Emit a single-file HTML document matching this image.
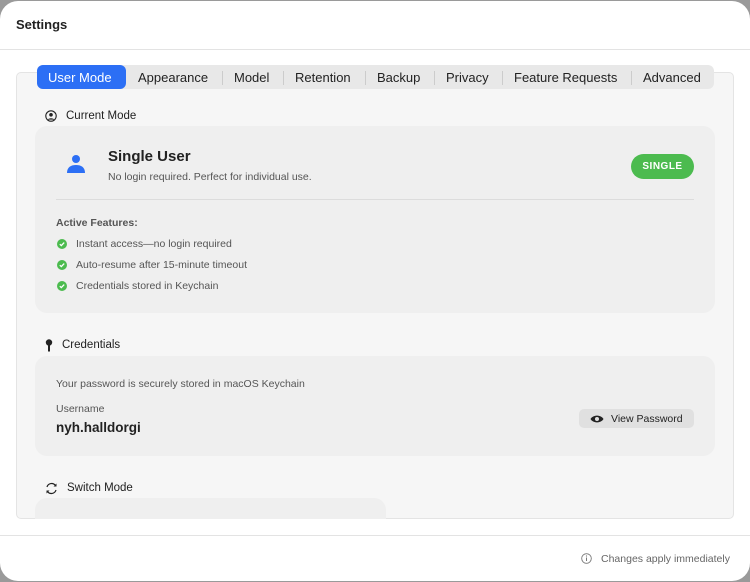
<!DOCTYPE html>
<html><head><style>
*{margin:0;padding:0;box-sizing:border-box}
body{width:750px;height:582px;background:#9a9a9a;font-family:"Liberation Sans",sans-serif;position:relative;overflow:hidden;color:#222}
.win{position:absolute;left:0;top:1px;width:750px;height:580px;background:#fff;border-radius:18px;overflow:hidden}
.abs{position:absolute}
.t{position:absolute;white-space:nowrap}
.s{font-size:10.5px;color:#555}
.h{font-size:11.5px}
</style></head><body>
<div class="win">
<div class="t" style="left:16px;top:16px;font-size:13px;font-weight:bold;color:#222">Settings</div>
<div class="abs" style="left:0;top:48px;width:750px;height:1px;background:#e3e3e3"></div>
<div class="abs" style="left:16px;top:71px;width:718px;height:447px;background:#f6f6f6;border:1px solid #e4e4e4;border-radius:5px"></div>
<div class="abs" style="left:37px;top:64px;width:677px;height:24px;background:#e8e8e8;border-radius:6px"></div>
<div class="abs" style="left:37px;top:64px;width:89px;height:24px;background:#2c6ff5;border-radius:6px"></div>
<div class="t" style="left:48px;top:69px;font-size:13px;color:#fff">User Mode</div>
<div class="t" style="left:138px;top:69px;font-size:13px">Appearance</div>
<div class="abs" style="left:222px;top:70px;width:1px;height:14px;background:#ccc"></div>
<div class="t" style="left:234px;top:69px;font-size:13px">Model</div>
<div class="abs" style="left:283px;top:70px;width:1px;height:14px;background:#ccc"></div>
<div class="t" style="left:295px;top:69px;font-size:13px">Retention</div>
<div class="abs" style="left:365px;top:70px;width:1px;height:14px;background:#ccc"></div>
<div class="t" style="left:377px;top:69px;font-size:13px">Backup</div>
<div class="abs" style="left:434px;top:70px;width:1px;height:14px;background:#ccc"></div>
<div class="t" style="left:446px;top:69px;font-size:13px">Privacy</div>
<div class="abs" style="left:502px;top:70px;width:1px;height:14px;background:#ccc"></div>
<div class="t" style="left:514px;top:69px;font-size:13px">Feature Requests</div>
<div class="abs" style="left:631px;top:70px;width:1px;height:14px;background:#ccc"></div>
<div class="t" style="left:643px;top:69px;font-size:13px">Advanced</div>

<svg class="abs" style="left:45px;top:109px" width="12" height="12" viewBox="0 0 12 12"><circle cx="6" cy="6" r="5.2" fill="none" stroke="#222" stroke-width="1.1"/><circle cx="6" cy="4.8" r="1.8" fill="#222"/><path d="M2.8 9.6C3.6 7.8 8.4 7.8 9.2 9.6" fill="#222"/></svg>
<div class="t h" style="left:66px;top:109px">Current Mode</div>
<div class="abs" style="left:35px;top:125px;width:680px;height:187px;background:#efefef;border-radius:12px"></div>
<svg class="abs" style="left:66px;top:153px" width="20" height="20" viewBox="0 0 20 20"><circle cx="10" cy="5" r="4" fill="#2c6ff5"/><path d="M1 19C1 13 5 11 10 11S19 13 19 19Z" fill="#2c6ff5"/></svg>
<div class="t" style="left:108px;top:147px;font-size:15px;font-weight:bold">Single User</div>
<div class="t s" style="left:108px;top:170px">No login required. Perfect for individual use.</div>
<div class="abs" style="left:631px;top:153px;width:63px;height:25px;background:#4cbb4f;border-radius:13px;color:#fff;font-size:10px;font-weight:bold;text-align:center;line-height:25px;letter-spacing:0.5px">SINGLE</div>
<div class="abs" style="left:56px;top:198px;width:638px;height:1px;background:#dcdcdc"></div>
<div class="t s" style="left:56px;top:216px;font-weight:bold">Active Features:</div>
<svg class="abs" style="left:57px;top:238px" width="10" height="10" viewBox="0 0 10 10"><circle cx="5" cy="5" r="5" fill="#4cbb4f"/><path d="M2.8 5.2L4.3 6.6L7.2 3.6" fill="none" stroke="#fff" stroke-width="1.3"/></svg>
<div class="t s" style="left:76px;top:237px">Instant access—no login required</div>
<svg class="abs" style="left:57px;top:259px" width="10" height="10" viewBox="0 0 10 10"><circle cx="5" cy="5" r="5" fill="#4cbb4f"/><path d="M2.8 5.2L4.3 6.6L7.2 3.6" fill="none" stroke="#fff" stroke-width="1.3"/></svg>
<div class="t s" style="left:76px;top:258px">Auto-resume after 15-minute timeout</div>
<svg class="abs" style="left:57px;top:280px" width="10" height="10" viewBox="0 0 10 10"><circle cx="5" cy="5" r="5" fill="#4cbb4f"/><path d="M2.8 5.2L4.3 6.6L7.2 3.6" fill="none" stroke="#fff" stroke-width="1.3"/></svg>
<div class="t s" style="left:76px;top:279px">Credentials stored in Keychain</div>

<svg class="abs" style="left:45px;top:338px" width="8" height="13" viewBox="0 0 8 13"><circle cx="4" cy="3.5" r="3.2" fill="#222"/><rect x="3" y="5" width="2" height="7.5" fill="#222"/></svg>
<div class="t h" style="left:62px;top:338px">Credentials</div>
<div class="abs" style="left:35px;top:355px;width:680px;height:100px;background:#efefef;border-radius:12px"></div>
<div class="t s" style="left:56px;top:377px">Your password is securely stored in macOS Keychain</div>
<div class="t s" style="left:56px;top:402px">Username</div>
<div class="t" style="left:56px;top:419px;font-size:13.5px;font-weight:bold">nyh.halldorgi</div>
<div class="abs" style="left:579px;top:408px;width:115px;height:19px;background:#e0e0e0;border-radius:5px"></div>
<svg class="abs" style="left:590px;top:413px" width="14" height="10" viewBox="0 0 14 10"><path d="M0.5 5C3 0.5 11 0.5 13.5 5C11 9.5 3 9.5 0.5 5Z" fill="#222"/><circle cx="7" cy="5" r="2" fill="#e0e0e0"/></svg>
<div class="t" style="left:611px;top:412px;font-size:10.5px">View Password</div>

<svg class="abs" style="left:45px;top:481px" width="13" height="13" viewBox="0 0 13 13"><path d="M2 5A4.8 4.8 0 0 1 10.5 3.5M11 8A4.8 4.8 0 0 1 2.5 9.5" fill="none" stroke="#222" stroke-width="1.2"/><path d="M11.5 1.5V4.5H8.5Z M1.5 11.5V8.5H4.5Z" fill="#222"/></svg>
<div class="t h" style="left:67px;top:481px">Switch Mode</div>
<div class="abs" style="left:35px;top:497px;width:351px;height:21px;background:#efefef;border-radius:12px 12px 0 0"></div>

<div class="abs" style="left:0;top:534px;width:750px;height:1px;background:#e3e3e3"></div>
<svg class="abs" style="left:581px;top:552px" width="11" height="11" viewBox="0 0 11 11"><circle cx="5.5" cy="5.5" r="4.8" fill="none" stroke="#777" stroke-width="0.9"/><rect x="5" y="4.5" width="1" height="3.5" fill="#777"/><circle cx="5.5" cy="3" r="0.6" fill="#777"/></svg>
<div class="t" style="left:601px;top:552px;font-size:10.5px;color:#666">Changes apply immediately</div>
</div>
</body></html>
